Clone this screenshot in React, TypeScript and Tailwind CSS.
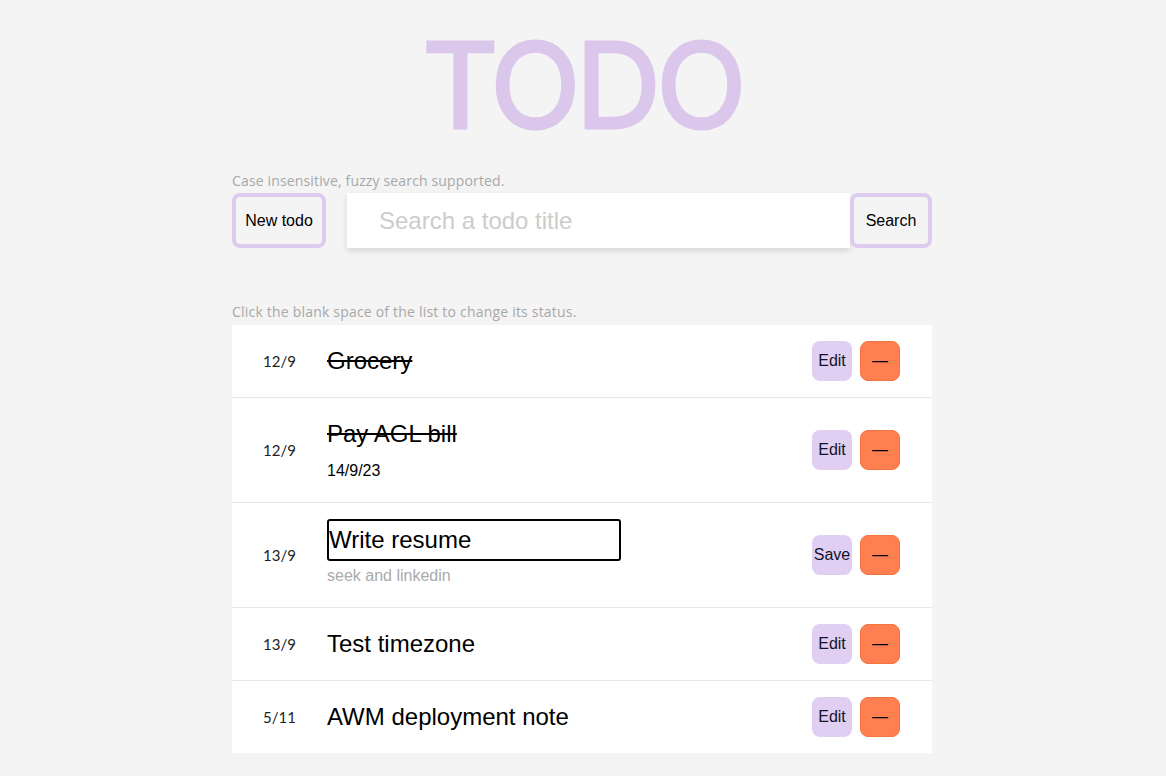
import { ReactNode } from 'react';

interface Todo {
  date: string;
  title: string;
  note?: string;
  done?: boolean;
  editing?: boolean;
}

const todos: Todo[] = [
  { date: '12/9', title: 'Grocery', done: true },
  { date: '12/9', title: 'Pay AGL bill', note: '14/9/23', done: true },
  { date: '13/9', title: 'Write resume', note: 'seek and linkedin', editing: true },
  { date: '13/9', title: 'Test timezone' },
  { date: '5/11', title: 'AWM deployment note' },
];

const poppins = "font-['Lato','Open_Sans',sans-serif]";
const hint = "font-['Open_Sans','Lato',sans-serif]";
const arial = "font-['Liberation_Sans',Arial,sans-serif]";

function OutlineButton({ children, className = '' }: { children: ReactNode; className?: string }) {
  return (
    <button
      className={`h-[55px] rounded-[8px] border-4 border-[#dccbee] bg-[#f4f4f4] text-[16px] text-black ${arial} ${className}`}
    >
      {children}
    </button>
  );
}

function TodoRow({ todo, last }: { todo: Todo; last: boolean }) {
  return (
    <li className={`flex items-center bg-white pr-8 ${last ? '' : 'border-b border-[#e8e8e8]'}`}>
      <span className={`w-[95px] shrink-0 text-center text-[15px] text-[#222] ${poppins}`}>{todo.date}</span>
      <div className={`flex-1 py-[22px] ${arial}`}>
        {todo.editing ? (
          <input
            readOnly
            value={todo.title}
            className="-mt-[6px] block h-[42px] w-[294px] rounded-[3px] border-2 border-black bg-white px-0 text-[24px] text-black outline-none"
          />
        ) : (
          <p className={`text-[24px] leading-[28px] text-black ${todo.done ? 'line-through' : ''}`}>{todo.title}</p>
        )}
        {todo.note && (
          <p
            className={`text-[16px] leading-[18px] ${todo.editing ? 'mt-[6px] text-[#aaaaaa]' : 'mt-[14px] text-black'}`}
          >
            {todo.note}
          </p>
        )}
      </div>
      <div className={`flex gap-2 ${arial}`}>
        <button className="h-10 w-10 rounded-[8px] bg-[#e0cff2] text-[16px] text-[#141428]">
          {todo.editing ? 'Save' : 'Edit'}
        </button>
        <button className="h-10 w-10 rounded-[8px] border border-[#f2743f] bg-[#ff7f50] text-[16px] text-black">
          —
        </button>
      </div>
    </li>
  );
}

export default function App() {
  return (
    <div className="min-h-[776px] bg-[#f4f4f4] pt-[25px] pb-6">
      <div className="ml-[232px] w-[700px]">
        <h1
          className="h-[120px] text-center font-['Inter',sans-serif] text-[118px] leading-[120px] font-normal tracking-[-0.04em] text-[#dbc6ec] [-webkit-text-stroke:3px_#dbc6ec]"
        >
          TODO
        </h1>

        <p className={`mt-[26px] text-[14px] leading-[20px] tracking-[0.15px] text-[#a8a8a8] ${hint}`}>
          Case insensitive, fuzzy search supported.
        </p>
        <div className="mt-[2px] flex items-center">
          <OutlineButton className="w-[94px]">New todo</OutlineButton>
          <input
            readOnly
            placeholder="Search a todo title"
            className={`ml-[21px] h-[55px] flex-1 bg-white pl-8 text-[24px] text-black shadow-[0_3px_6px_rgba(0,0,0,0.12)] outline-none placeholder:text-[#cccccc] ${arial}`}
          />
          <OutlineButton className="w-[82px]">Search</OutlineButton>
        </div>

        <p className={`mt-[54px] text-[14px] leading-[20px] tracking-[0.2px] text-[#a8a8a8] ${hint}`}>
          Click the blank space of the list to change its status.
        </p>
        <ul className="mt-[3px]">
          {todos.map((t, i) => (
            <TodoRow key={i} todo={t} last={i === todos.length - 1} />
          ))}
        </ul>
      </div>
    </div>
  );
}
